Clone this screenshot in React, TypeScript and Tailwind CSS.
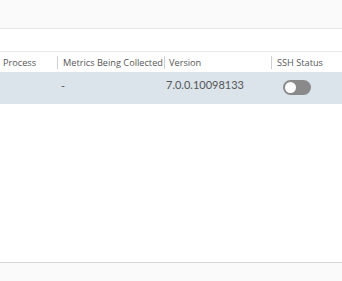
export default function App() {
  return (
    <div className="w-[342px] h-[281px] flex flex-col bg-white text-[#565656] overflow-hidden" style={{ fontFamily: 'Lato, "Open Sans", sans-serif' }}>
      <div className="h-[29px] bg-[#fafafa] border-b border-[#e8e8e8]" />
      <div className="h-[23px] bg-white border-b border-[#e8e8e8]" />
      <div className="flex h-[20px] items-center pt-[2px] text-[9.2px] bg-white" style={{ fontFamily: '"Open Sans", sans-serif' }}>
        <div className="w-[57px] shrink-0 pl-[3px]">Process</div>
        <div className="w-[107px] shrink-0 flex items-center">
          <span className="w-px shrink-0 h-[13px] bg-[#d0d0d0]" />
          <span className="pl-[5px] whitespace-nowrap">Metrics Being Collected</span>
        </div>
        <div className="w-[107px] shrink-0 flex items-center">
          <span className="w-px shrink-0 h-[13px] bg-[#d0d0d0]" />
          <span className="pl-[4px]">Version</span>
        </div>
        <div className="flex-1 flex items-center">
          <span className="w-px shrink-0 h-[13px] bg-[#d0d0d0]" />
          <span className="pl-[5px]">SSH Status</span>
        </div>
      </div>
      <div className="flex h-[32px] bg-[#dbe4eb] text-[11px]">
        <div className="w-[57px] shrink-0" />
        <div className="w-[107px] shrink-0 pl-[4px] pt-[6px]">-</div>
        <div className="w-[107px] shrink-0 pl-[2px] pt-[5px]">7.0.0.10098133</div>
        <div className="flex-1 pl-[12px] pt-[8px]">
          <div className="w-[28px] h-[15px] rounded-full bg-[#8a8a8a] p-[2px]">
            <div className="w-[11px] h-[11px] rounded-full bg-white" />
          </div>
        </div>
      </div>
      <div className="flex-1" />
      <div className="h-[19px] bg-[#fafafa] border-t border-[#d7d7d7]" />
    </div>
  )
}
